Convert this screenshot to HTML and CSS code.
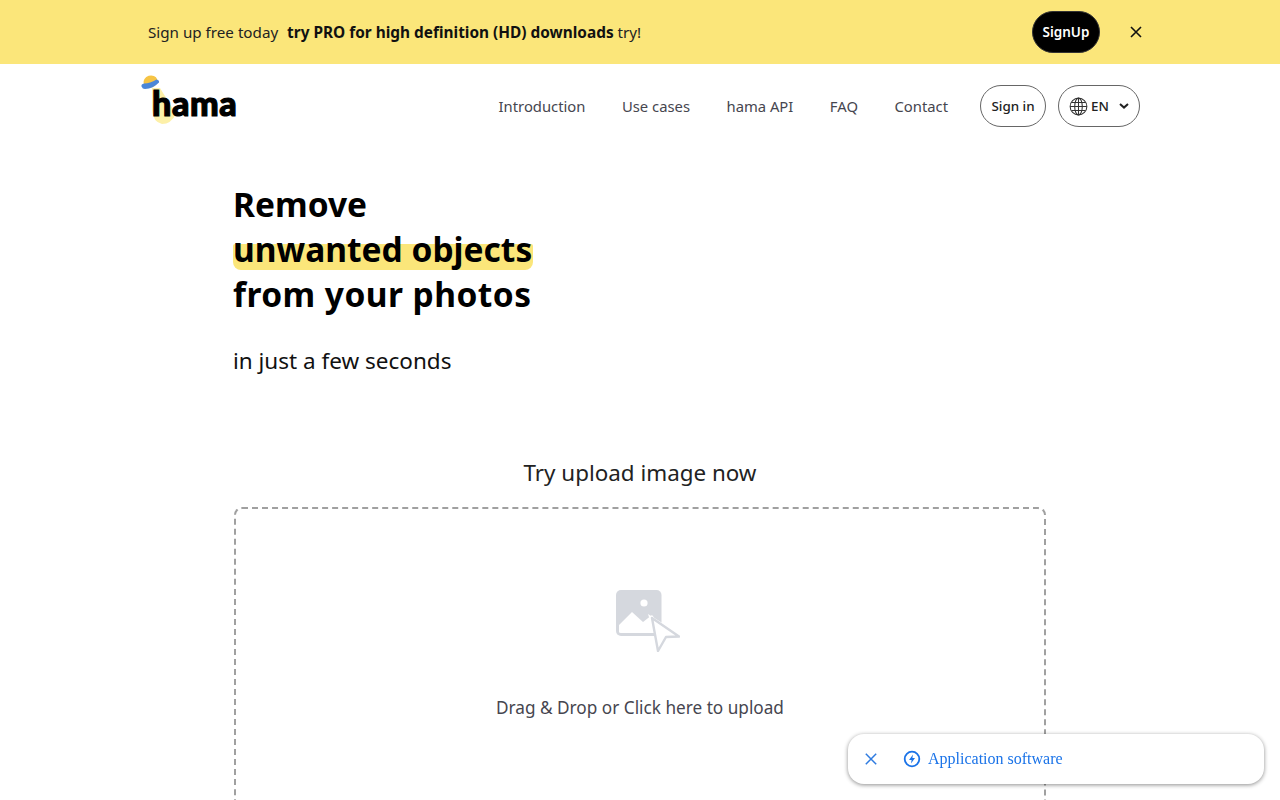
FILE: index.html
```html
<!DOCTYPE html>
<html lang="en">
<head>
<meta charset="utf-8">
<title>hama</title>
<link rel="stylesheet" href="styles.css">
</head>
<body>
<div class="banner">
  <div class="banner-inner">
    <p class="banner-text">Sign up free today <b>try PRO for high definition (HD) downloads</b> try!</p>
    <a class="signup">SignUp</a>
    <svg class="banner-close" viewBox="0 0 12 12" width="12" height="12"><path d="M1 1l10 10M11 1L1 11" stroke="#111" stroke-width="1.6" fill="none"/></svg>
  </div>
</div>
<header class="header">
  <a class="logo">
    <svg class="logo-art" viewBox="0 0 40 50" width="40" height="50">
      <path d="M12 14L20 14L36 40Q31 50 22 50Q13 48 12 36Z" fill="#fdf0a8"/>
      <ellipse cx="10.500" cy="7.500" rx="7" ry="6" fill="#f6c445" transform="rotate(-18 10.500 7.500)"/>
      <path d="M1.500 12.500Q1 10 4 9.500Q10 9.500 16.500 5.500Q19.500 6 19 8.500Q13 14.500 5 15Q2.500 15 1.500 12.500Z" fill="#4a86d8"/>
    </svg>
    <span class="logo-text">hama</span>
  </a>
  <nav class="nav">
    <a>Introduction</a><a>Use cases</a><a>hama API</a><a>FAQ</a><a>Contact</a>
  </nav>
  <a class="pill signin">Sign in</a>
  <a class="pill lang">
    <svg viewBox="0 0 20 20" width="19" height="19" fill="none" stroke="#333" stroke-width="1.100"><circle cx="10" cy="10" r="8.800"/><ellipse cx="10" cy="10" rx="4" ry="8.800"/><path d="M10 1.200v17.600M1.200 10h17.600M2.800 5.700h14.400M2.800 14.300h14.400"/></svg>
    <span>EN</span>
    <svg class="chev" viewBox="0 0 10 6" width="10" height="6"><path d="M1 1l4 3.600L9 1" stroke="#222" stroke-width="2" fill="none"/></svg>
  </a>
</header>
<main class="main">
  <h1 class="title">Remove<br><span class="mark">unwanted objects</span><br><span class="line-three">from your photos</span></h1>
  <p class="sub">in just a few seconds</p>
  <h2 class="try">Try upload image now</h2>
  <div class="drop">
    <svg class="drop-icon" viewBox="0 0 64 62" width="64" height="62">
      <rect x="0" y="0" width="45.500" height="46" rx="5" fill="#d5d8de"/>
      <circle cx="28" cy="13" r="3.600" fill="#fff"/>
      <path d="M3 42V35L16 22L27 32L36 25L40 30L40 43H5Q3 43 3 42Z" fill="#fff"/>
      <path d="M32 24L64 44L50 47L44 62Z" fill="#fff"/>
      <path d="M36 28L63 46.500L50 47L42 61Z" fill="#fff" stroke="#d5d8de" stroke-width="2.400" stroke-linejoin="round"/>
    </svg>
    <p class="drop-text">Drag &amp; Drop or Click here to upload</p>
  </div>
</main>
<div class="toast">
  <svg viewBox="0 0 12 12" width="12" height="12"><path d="M.8.800l10.400 10.400M11.200.800L.8 11.200" stroke="#2f7be0" stroke-width="1.500" fill="none"/></svg>
  <svg class="bolt" viewBox="0 0 18 18" width="18" height="18"><circle cx="9" cy="9" r="7.300" fill="none" stroke="#1a73e8" stroke-width="1.800"/><path d="M10 4.500L6 10h2.600L8 13.500 12 8H9.400z" fill="#1a73e8"/></svg>
  <span class="toast-text">Application software</span>
</div>
</body>
</html>
```
FILE: styles.css
```css
* { box-sizing: border-box; }
html, body { margin: 0; height: 800px; overflow: hidden; }
body { font-family: "Noto Sans", "Open Sans", sans-serif; color: #111; background: #fff; }
p, h1, h2 { margin: 0; }
.banner { height: 64px; background: #fbe67a; }
.banner-inner { width: 1000px; height: 64px; margin: 0 auto; display: flex; align-items: center; padding-left: 8px; }
.banner-text { font-size: 15.200px; color: #222; flex: 1; white-space: pre-wrap; }
.banner-text b { font-size: 15.400px; font-weight: 700; color: #111; margin-left: 5px; }
.signup { width: 68px; height: 42px; border-radius: 21px; background: #000; color: #fff; font-size: 13.500px; font-weight: 600; display: flex; align-items: center; justify-content: center; border: 1px solid #333; }
.banner-close { margin-left: 30px; margin-right: -2px; }
.header { width: 1000px; height: 84px; margin: 0 auto; display: flex; align-items: center; position: relative; }
.logo { display: block; width: 100px; height: 60px; position: relative; }
.logo-art { position: absolute; left: 0; top: -2px; }
.logo-text { position: absolute; left: 12px; top: 5px; font-family: "Lato", sans-serif; font-weight: 900; font-size: 34px; letter-spacing: .6px; color: #000; -webkit-text-stroke: 1.200px #000; line-height: 44px; }
.nav { margin-left: auto; display: flex; gap: 36.500px; font-size: 14.800px; color: #46464f; margin-right: 32px; }
.pill { height: 42px; border: 1px solid #666; border-radius: 21px; display: flex; align-items: center; font-size: 13.400px; color: #222; }
.signin { width: 66px; justify-content: center; font-weight: 500; margin-right: 12px; }
.lang { width: 82px; padding-left: 10px; gap: 3px; font-weight: 500; }
.chev { margin-left: 7px; }
.main { width: 812px; margin: 0 auto; padding-top: 34px; }
.title { font-size: 33.500px; font-weight: 700; line-height: 45px; color: #000; margin-left: -1px; }
.mark { display: inline-block; position: relative; z-index: 0; }
.mark::before { content: ""; position: absolute; z-index: -1; left: 0; right: -1px; top: 17px; bottom: 2px; background: #fbe67a; border-radius: 2px 2px 8px 8px; }
.line-three { letter-spacing: .45px; }
.sub { font-size: 22.500px; line-height: 32px; margin-top: 28px; margin-left: -1px; color: #111; }
.try { font-size: 22.400px; font-weight: 400; line-height: 32px; text-align: center; margin-top: 80px; color: #222; }
.drop { height: 400px; margin-top: 18px; border: 2px dashed #a0a0a0; border-radius: 8px; display: flex; flex-direction: column; align-items: center; padding-top: 81px; }
.drop-icon { display: block; margin-left: 16px; }
.drop-text { font-size: 17.200px; color: #46464f; margin-top: 43px; line-height: 26px; }
.toast { position: fixed; left: 848px; top: 734px; width: 416px; height: 50px; background: #fff; border-radius: 16px; box-shadow: 0 1px 4px rgba(0,0,0,.45); display: flex; align-items: center; padding-left: 17px; }
.bolt { margin-left: 26px; }
.toast-text { font-family: "Liberation Serif", serif; font-size: 16px; color: #1a73e8; margin-left: 7px; }
```
